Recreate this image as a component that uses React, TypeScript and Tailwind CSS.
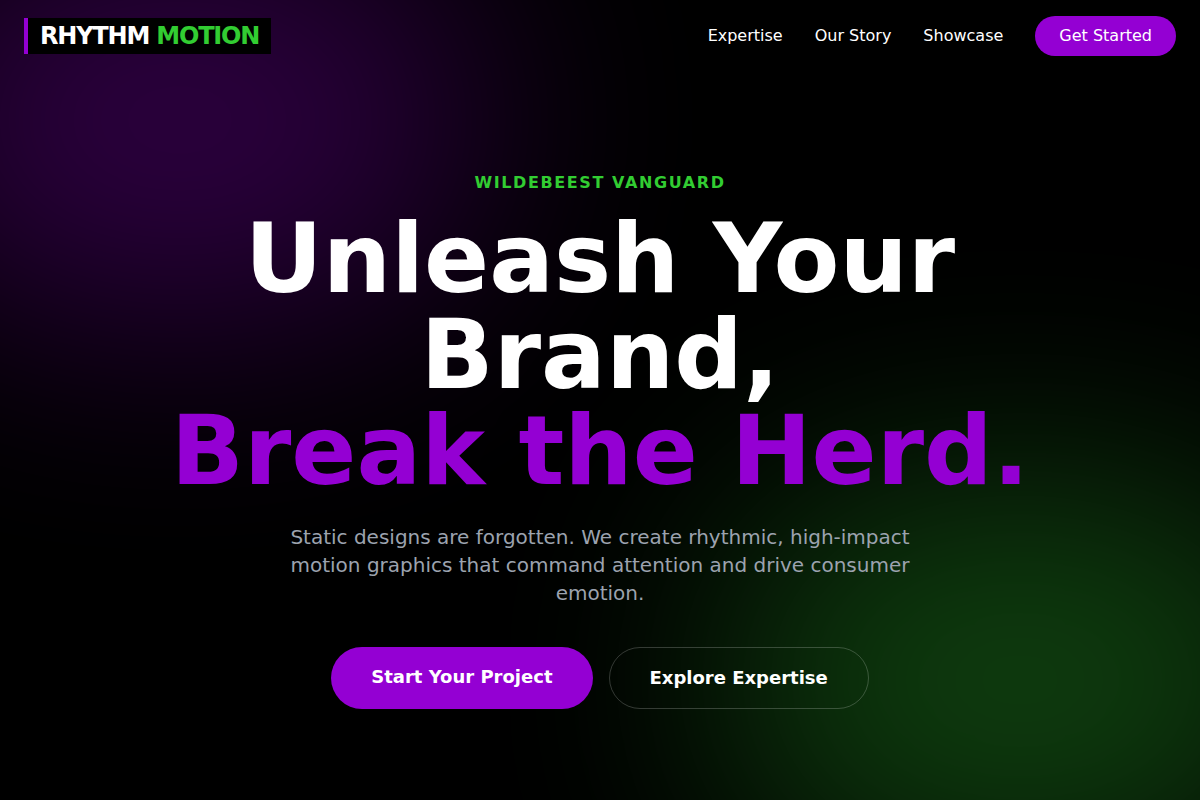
import React from 'react';

const links = [
  { label: 'Expertise', href: '#expertise' },
  { label: 'Our Story', href: '#story' },
  { label: 'Showcase', href: '#showcase' },
];

function Navbar() {
  return (
    <nav className="flex items-center justify-between px-6 py-4">
      <a href="#" className="border-l-4 border-[#9400d3] bg-black px-3 text-2xl leading-9 font-bold tracking-tighter">
        RHYTHM <span className="text-[#32cd32]">MOTION</span>
      </a>
      <div className="flex items-center gap-8">
        {links.map((link) => (
          <a key={link.href} href={link.href}>{link.label}</a>
        ))}
        <button type="button" className="rounded-full bg-[#9400d3] px-6 py-2">
          Get Started
        </button>
      </div>
    </nav>
  );
}

function Hero() {
  return (
    <section className="flex flex-1 flex-col items-center justify-center px-6 pt-2 text-center">
      <p className="mb-4 font-bold uppercase tracking-widest text-[#32cd32]">
        Wildebeest Vanguard
      </p>
      <h1 className="mb-6 max-w-4xl text-8xl leading-none font-bold">
        Unleash Your Brand,
        <br />
        <span className="text-[#9400d3]">Break the Herd.</span>
      </h1>
      <p className="mb-10 max-w-2xl text-xl text-[#9ca3af]">
        Static designs are forgotten. We create rhythmic, high-impact motion graphics that command attention and drive consumer emotion.
      </p>
      <div className="flex gap-4">
        <a href="#contact" className="rounded-full bg-[#9400d3] px-10 py-4 text-lg font-bold">
          Start Your Project
        </a>
        <a href="#expertise" className="rounded-full border border-white/20 px-10 py-4 text-lg font-bold">
          Explore Expertise
        </a>
      </div>
    </section>
  );
}

export default function App() {
  return (
    <div className="relative isolate flex min-h-screen flex-col overflow-hidden bg-black font-['DejaVu_Sans',sans-serif] text-white">
      <div className="absolute inset-0 -z-10 overflow-hidden opacity-30">
        <div className="absolute -top-[10%] -left-[10%] h-1/2 w-1/2 rounded-full bg-[#9400d3] blur-[120px]" />
        <div className="absolute -right-[10%] -bottom-[10%] h-1/2 w-1/2 rounded-full bg-[#32cd32] blur-[120px]" />
      </div>
      <Navbar />
      <Hero />
    </div>
  );
}
